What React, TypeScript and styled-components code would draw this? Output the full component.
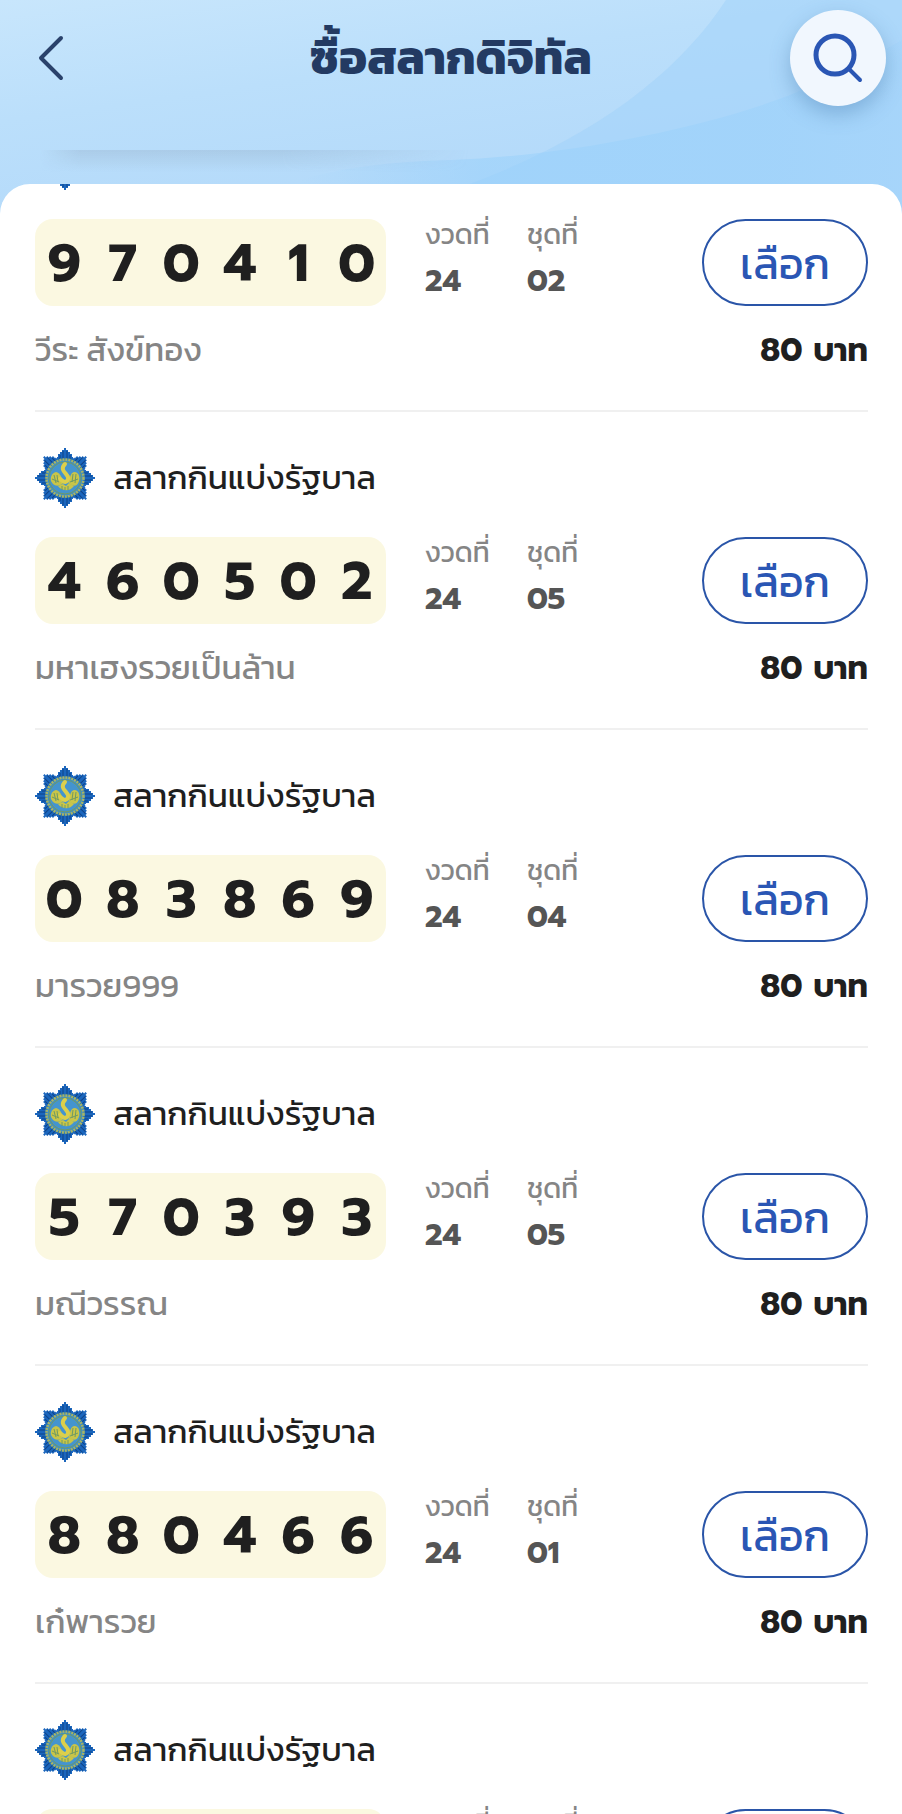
import React from 'react';
import styled, { createGlobalStyle } from 'styled-components';

const textFont = 'Kanit, Prompt, "Noto Sans Thai", "Noto Sans", sans-serif';
const strongFont = 'Prompt, Kanit, "Noto Sans Thai", "Noto Sans", sans-serif';

const GlobalStyle = createGlobalStyle`
  * { box-sizing: border-box; }
  body {
    margin: 0;
    background: #ffffff;
    color: #1f1f1f;
    font-family: ${textFont};
  }
  button { font-family: inherit; cursor: pointer; }
`;

const Screen = styled.div`
  position: relative;
  display: flex;
  flex-direction: column;
  height: 100vh;
  overflow: hidden;
  background: linear-gradient(172deg, #c8e6fc 0, #bbdffb 120px, #b4dafa 240px);
`;

const Backdrop = styled.svg`
  position: absolute;
  top: 0;
  left: 0;
  width: 100%;
  height: 240px;
`;

const Header = styled.header`
  position: relative;
  display: grid;
  grid-template-columns: 96px 1fr 96px;
  align-items: start;
  padding: 10px 16px 0;
  height: 150px;
`;

const BackButton = styled.button`
  display: flex;
  align-items: center;
  justify-content: center;
  width: 70px;
  height: 96px;
  padding: 0;
  border: 0;
  background: none;
`;

const Title = styled.h1`
  margin: 0;
  color: #233a62;
  font-size: 47px;
  font-weight: 700;
  line-height: 96px;
  text-align: center;
  white-space: nowrap;
`;

const SearchButton = styled.button`
  display: flex;
  align-items: center;
  justify-content: center;
  width: 96px;
  height: 96px;
  padding: 0;
  border: 0;
  border-radius: 50%;
  background: #f1f7fe;
  box-shadow: 0 8px 20px rgba(60, 110, 160, 0.36);
`;

const ScrollShade = styled.div`
  position: relative;
  width: 52%;
  height: 34px;
  background: linear-gradient(180deg, rgba(140, 165, 190, 0.3), rgba(140, 165, 190, 0) 22px);
  mask-image: linear-gradient(90deg, transparent 40px, #000 80px, #000 60%, transparent);
`;

const Sheet = styled.main`
  position: relative;
  flex: 1;
  min-height: 0;
  overflow: hidden;
  padding: 0 34px 0 35px;
  border-radius: 30px 30px 0 0;
  background: #ffffff;
`;

const TicketList = styled.ul`
  margin: -90px 0 0;
  padding: 0;
  list-style: none;
`;

const Ticket = styled.li`
  padding: 36px 0;
  border-bottom: 2px solid #f0f0f0;
`;

const TicketHead = styled.div`
  display: flex;
  align-items: center;
  gap: 18px;
  height: 60px;
`;

const TicketKind = styled.h2`
  margin: 0;
  font-size: 33px;
  font-weight: 400;
  line-height: 48px;
`;

const TicketBody = styled.div`
  display: flex;
  align-items: center;
  height: 87px;
  margin-top: 29px;
`;

const Digits = styled.div`
  display: grid;
  grid-template-columns: repeat(6, 1fr);
  align-items: center;
  width: 351px;
  height: 87px;
  border-radius: 18px;
  background: #fbf8e1;
  font-family: ${strongFont};
  font-size: 53px;
  font-weight: 700;
  line-height: 80px;
  text-align: center;
`;

const Meta = styled.dl`
  display: flex;
  flex: 1;
  align-self: flex-start;
  gap: 16px;
  margin: -8px 0 0 39px;
`;

const MetaItem = styled.div`
  width: 86px;
`;

const MetaLabel = styled.dt`
  color: #858585;
  font-size: 28px;
  line-height: 46px;
  white-space: nowrap;
`;

const MetaValue = styled.dd`
  margin: 0;
  color: #555555;
  font-family: ${strongFont};
  font-size: 30px;
  font-weight: 700;
  line-height: 48px;
`;

const SelectButton = styled.button`
  width: 166px;
  height: 87px;
  padding: 2px 0 0;
  border: 2px solid #2a55a8;
  border-radius: 44px;
  background: #ffffff;
  color: #2a56b4;
  font-size: 43px;
  font-weight: 400;
`;

const TicketFoot = styled.div`
  display: flex;
  align-items: center;
  justify-content: space-between;
  height: 48px;
  margin-top: 20px;
`;

const Seller = styled.span`
  color: #858585;
  font-size: 33px;
  line-height: 48px;
`;

const Price = styled.strong`
  padding-top: 2px;
  font-family: ${strongFont};
  font-size: 32px;
  font-weight: 700;
  line-height: 48px;
`;

type TicketData = { number: string; draw: string; set: string; seller: string };

const tickets: TicketData[] = [
  { number: '970410', draw: '24', set: '02', seller: 'วีระ สังข์ทอง' },
  { number: '460502', draw: '24', set: '05', seller: 'มหาเฮงรวยเป็นล้าน' },
  { number: '083869', draw: '24', set: '04', seller: 'มารวย999' },
  { number: '570393', draw: '24', set: '05', seller: 'มณีวรรณ' },
  { number: '880466', draw: '24', set: '01', seller: 'เก๋พารวย' },
  { number: '', draw: '', set: '', seller: '' },
];

const rays = [0, 45, 90, 135, 180, 225, 270, 315];

const Emblem = () => (
  <svg width="60" height="60" viewBox="-30 -30 60 60" aria-hidden="true">
    {rays.map((angle) => (
      <g key={angle} transform={`rotate(${angle})`}>
        <path
          d="M-1-30H1V-28H3V-26H5V-24H7V-21H8V-17L0 0-8-17V-21H-7V-24H-5V-26H-3V-28H-1Z"
          fill="#1b66bd"
        />
        <path d="M-2-27V-18M2-27V-18M-5-23V-17M5-23V-17" stroke="#0f4286" strokeWidth="1" />
      </g>
    ))}
    <circle r="20" fill="#2b75ad" />
    <circle r="18.500" fill="#3f8fc4" stroke="#a9b465" strokeWidth="2.500" strokeDasharray="2 1" />
    <circle r="16" fill="#4494cf" stroke="#6f9a65" strokeWidth="1" />
    <g fill="#c9c548">
      <path d="M-2 5C-5 9-11 9-14 3-15-1-13-5-9-6-7-6-5-4-3 0Z" />
      <path d="M4 5C8 9 12 9 14 3 15-1 14-5 10-6 7-6 6-4 5-1Z" />
      <path d="M-7 8C-4 13 5 14 9 8L4 5 1 8-2 6Z" />
    </g>
    <path d="M0-14C-4-10-2-7 1-4 4-1 4 3 0 4-2 4-3 2-5 1" fill="none" stroke="#dccf4b" strokeWidth="4" strokeLinecap="round" />
    <path
      d="M-11-3-9 5M-8-3-7 4M11-4 10 5M8-4 7 4M-13 1-6 4M13 1 5 4M-3 8V12M3 8V12M0 9V12"
      fill="none"
      stroke="#6f9a65"
      strokeWidth="1"
    />
  </svg>
);

const TicketRow = ({ ticket }: { ticket: TicketData }) => (
  <Ticket>
    <TicketHead>
      <Emblem />
      <TicketKind>สลากกินแบ่งรัฐบาล</TicketKind>
    </TicketHead>
    <TicketBody>
      <Digits>
        {ticket.number.split('').map((digit, index) => (
          <span key={index}>{digit}</span>
        ))}
      </Digits>
      <Meta>
        <MetaItem>
          <MetaLabel>งวดที่</MetaLabel>
          <MetaValue>{ticket.draw}</MetaValue>
        </MetaItem>
        <MetaItem>
          <MetaLabel>ชุดที่</MetaLabel>
          <MetaValue>{ticket.set}</MetaValue>
        </MetaItem>
      </Meta>
      <SelectButton type="button">เลือก</SelectButton>
    </TicketBody>
    <TicketFoot>
      <Seller>{ticket.seller}</Seller>
      <Price>80 บาท</Price>
    </TicketFoot>
  </Ticket>
);

export default function App() {
  return (
    <Screen>
      <GlobalStyle />
      <Backdrop viewBox="0 0 902 240" preserveAspectRatio="none" aria-hidden="true">
        <defs>
          <linearGradient id="wave" x1="0" x2="1">
            <stop offset="0" stopColor="#97d0fb" stopOpacity="0" />
            <stop offset="0.3" stopColor="#97d0fb" stopOpacity="0.5" />
            <stop offset="0.8" stopColor="#97d0fb" stopOpacity="0.4" />
            <stop offset="1" stopColor="#97d0fb" stopOpacity="0.2" />
          </linearGradient>
        </defs>
        <path d="M726 0C680 70 600 135 470 184V240H902V0Z" fill="#9fd2f9" fillOpacity="0.5" />
        <path d="M300 180Q360 162 451 160C560 156 700 130 790 95Q850 70 902 40V240H300Z" fill="url(#wave)" />
      </Backdrop>
      <Header>
        <BackButton type="button" aria-label="ย้อนกลับ">
          <svg width="26" height="46" viewBox="0 0 26 46" fill="none" aria-hidden="true">
            <path d="M23 3 3 23 23 43" stroke="#2a426b" strokeWidth="4" strokeLinecap="round" strokeLinejoin="round" />
          </svg>
        </BackButton>
        <Title>ซื้อสลากดิจิทัล</Title>
        <SearchButton type="button" aria-label="ค้นหา">
          <svg width="50" height="50" viewBox="0 0 50 50" fill="none" aria-hidden="true">
            <circle cx="22" cy="22" r="19" stroke="#2a56b4" strokeWidth="5" />
            <path d="m36 36 11 11" stroke="#2a56b4" strokeWidth="4" strokeLinecap="round" />
          </svg>
        </SearchButton>
      </Header>
      <ScrollShade />
      <Sheet>
        <TicketList>
          {tickets.map((ticket, index) => (
            <TicketRow key={index} ticket={ticket} />
          ))}
        </TicketList>
      </Sheet>
    </Screen>
  );
}
